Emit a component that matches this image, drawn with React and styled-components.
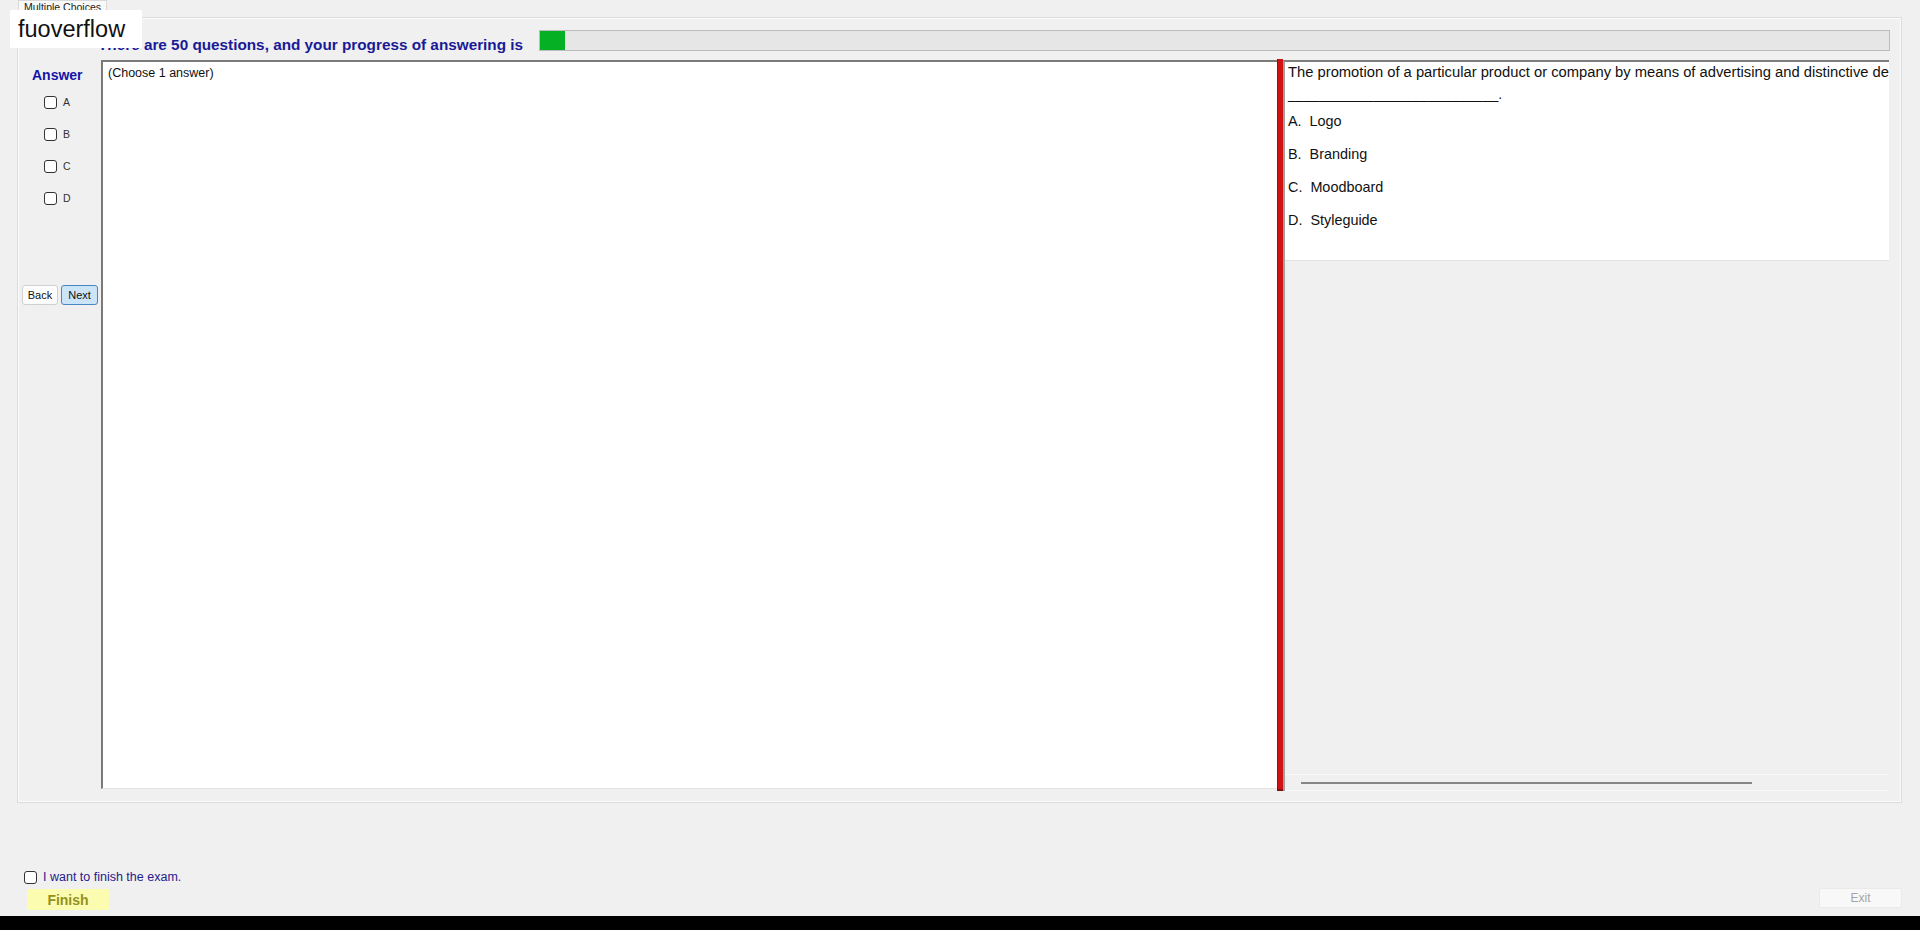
import React from "react";
import styled, { createGlobalStyle } from "styled-components";

// Base
const GlobalStyle = createGlobalStyle`
  html, body {
    margin: 0;
    padding: 0;
    background: #f0f0f0;
  }
  body {
    font-family: "Liberation Sans", Arial, sans-serif;
    color: #111;
  }
`;

const Window = styled.div`
  position: relative;
  width: 1920px;
  height: 930px;
  display: flex;
  flex-direction: column;
  background: #f0f0f0;
  overflow: hidden;
`;

const Watermark = styled.div`
  position: absolute;
  left: 10px;
  top: 10px;
  width: 132px;
  height: 38px;
  box-sizing: border-box;
  padding-left: 8px;
  background: #ffffff;
  font-size: 23.5px;
  line-height: 38px;
  color: #111;
  z-index: 5;
`;

// Tabs
const TabStrip = styled.div`
  height: 17px;
  display: flex;
  padding-left: 18px;
`;

const Tab = styled.div`
  width: 89px;
  height: 18px;
  box-sizing: border-box;
  border: 1px solid #d9d9d9;
  border-bottom: none;
  background: #f9f9f9;
  font-size: 10.5px;
  line-height: 12px;
  color: #222;
  text-align: center;
  overflow: hidden;
  position: relative;
  z-index: 1;
`;

const TabPage = styled.div`
  margin-left: 17px;
  width: 1885px;
  height: 786px;
  box-sizing: border-box;
  border: 1px solid #dcdcdc;
  box-shadow: inset 1px 1px 0 #fbfbfb, inset -1px -1px 0 #fbfbfb;
  display: flex;
  flex-direction: column;
`;

// Header
const Header = styled.div`
  height: 42px;
  display: flex;
  align-items: flex-start;
  padding-left: 80px;
`;

const Heading = styled.div`
  margin-top: 18px;
  font-size: 15.3px;
  line-height: 17px;
  font-weight: bold;
  color: #1a1a96;
  white-space: nowrap;
`;

const ProgressTrack = styled.div`
  margin: 12px 11px 0 16px;
  flex: 1;
  height: 21px;
  box-sizing: border-box;
  border: 1px solid #bcbcbc;
  background: #e6e6e6;
`;

const ProgressFill = styled.div`
  height: 100%;
  background: #06b025;
`;

// Body
const Body = styled.div`
  height: 731px;
  display: flex;
`;

const AnswerColumn = styled.div`
  width: 83px;
  display: flex;
  flex-direction: column;
  padding-top: 7px;
  box-sizing: border-box;
`;

const AnswerTitle = styled.div`
  padding-left: 14px;
  font-size: 14px;
  line-height: 16px;
  font-weight: bold;
  color: #1414a6;
`;

const OptionList = styled.div`
  margin-top: 3px;
  display: flex;
  flex-direction: column;
`;

const OptionRow = styled.label`
  height: 32px;
  display: flex;
  align-items: center;
  gap: 6px;
  padding-left: 26px;
  font-size: 10.5px;
  color: #333;
`;

const Box = styled.input.attrs({ type: "checkbox" })`
  appearance: none;
  margin: 0;
  width: 13px;
  height: 13px;
  box-sizing: border-box;
  border: 1px solid #333;
  border-radius: 3px;
  background: #fff;
  flex: none;
`;

const NavRow = styled.div`
  margin-top: 71px;
  padding-left: 4px;
  display: flex;
  gap: 3px;
`;

const NavButton = styled.button`
  width: ${(p) => p.$w}px;
  height: 20px;
  padding: 0;
  box-sizing: border-box;
  border-radius: 3px;
  border: 1px solid ${(p) => (p.$primary ? "#4a87c2" : "#d0d0d0")};
  background: ${(p) => (p.$primary ? "#cce4f7" : "#fdfdfd")};
  font-family: inherit;
  font-size: 11px;
  color: #111;
`;

const MainPanel = styled.div`
  width: 1176px;
  height: 729px;
  box-sizing: border-box;
  background: #fff;
  border-top: 2px solid #7a7a7a;
  border-left: 2px solid #7a7a7a;
  border-bottom: 1px solid #e4e4e4;
  padding: 4px 0 0 5px;
  font-size: 12.5px;
  line-height: 15px;
  color: #111;
`;

const Divider = styled.div`
  width: 6px;
  height: 732px;
  margin-top: -1px;
  box-sizing: border-box;
  background: #d01212;
  border-left: 1px solid #a00c0c;
  border-bottom: 2px solid #8a0e0e;
`;

const RightPanel = styled.div`
  width: 606px;
  height: 731px;
  box-sizing: border-box;
  border-left: 2px solid #a0a0a0;
  border-top: 2px solid #7e7e7e;
  display: flex;
  flex-direction: column;
`;

const QuestionBox = styled.div`
  height: 199px;
  box-sizing: border-box;
  background: #fff;
  padding: 2px 0 0 3px;
  font-size: 14.4px;
  color: #111;
  overflow: hidden;
  white-space: pre;
  border-bottom: 1px solid #e2e2e2;
`;

const QuestionLine = styled.div`
  line-height: 16px;
  height: ${(p) => p.$h || 16}px;
  font-size: ${(p) => p.$size || 14.4}px;
`;

const Choice = styled.div`
  line-height: 16px;
  height: 33px;
`;

const GrayArea = styled.div`
  flex: 1;
  background: #f0f0f0;
`;

const HScroll = styled.div`
  height: 17px;
  box-sizing: border-box;
  border-top: 1px solid #fafafa;
  border-bottom: 1px solid #fafafa;
  display: flex;
  align-items: center;
  padding-left: 16px;
`;

const Thumb = styled.div`
  width: 451px;
  height: 2px;
  background: #868686;
`;

// Footer
const Footer = styled.div`
  height: 113px;
  display: flex;
  justify-content: space-between;
  align-items: flex-end;
  padding: 0 18px 6px 24px;
  box-sizing: border-box;
`;

const FinishGroup = styled.div`
  display: flex;
  flex-direction: column;
`;

const ConfirmRow = styled.label`
  display: flex;
  align-items: center;
  gap: 6px;
  font-size: 12.5px;
  color: #26208c;
  height: 16px;
`;

const FinishButton = styled.button`
  margin: 4px 0 0 3px;
  width: 82px;
  height: 21px;
  padding: 0;
  border: none;
  border-radius: 2px;
  background: #fcfcb0;
  font-family: inherit;
  font-weight: bold;
  font-size: 14px;
  color: #92921c;
`;

const ExitButton = styled.button`
  margin-bottom: 2px;
  width: 83px;
  height: 20px;
  padding: 0;
  border: 1px solid #eaeaea;
  border-radius: 2px;
  background: #f8f8f8;
  font-family: inherit;
  font-size: 12px;
  color: #a4a4a4;
`;

const BlackBar = styled.div`
  height: 14px;
  background: #000;
`;

const options = ["A", "B", "C", "D"];
const choices = [
  { key: "A", text: "Logo" },
  { key: "B", text: "Branding" },
  { key: "C", text: "Moodboard" },
  { key: "D", text: "Styleguide" },
];

const App = () => {
  const progress = 25;

  return (
    <Window>
      <GlobalStyle />
      <Watermark>fuoverflow</Watermark>

      <TabStrip>
        <Tab>Multiple Choices</Tab>
      </TabStrip>

      <TabPage>
        <Header>
          <Heading>There are 50 questions, and your progress of answering is</Heading>
          <ProgressTrack>
            <ProgressFill style={{ width: `${progress}px` }} />
          </ProgressTrack>
        </Header>

        <Body>
          <AnswerColumn>
            <AnswerTitle>Answer</AnswerTitle>
            <OptionList>
              {options.map((o) => (
                <OptionRow key={o}>
                  <Box />
                  {o}
                </OptionRow>
              ))}
            </OptionList>
            <NavRow>
              <NavButton $w={36}>Back</NavButton>
              <NavButton $w={37} $primary>
                Next
              </NavButton>
            </NavRow>
          </AnswerColumn>

          <MainPanel>(Choose 1 answer)</MainPanel>

          <Divider />

          <RightPanel>
            <QuestionBox>
              <QuestionLine $h={22} $size={14.75}>
                The promotion of a particular product or company by means of advertising and distinctive design is
              </QuestionLine>
              <QuestionLine $h={27} $size={14}>
                ___________________________.
              </QuestionLine>
              {choices.map((c) => (
                <Choice key={c.key}>{`${c.key}.  ${c.text}`}</Choice>
              ))}
            </QuestionBox>
            <GrayArea />
            <HScroll>
              <Thumb />
            </HScroll>
          </RightPanel>
        </Body>
      </TabPage>

      <Footer>
        <FinishGroup>
          <ConfirmRow>
            <Box />I want to finish the exam.
          </ConfirmRow>
          <FinishButton>Finish</FinishButton>
        </FinishGroup>
        <ExitButton disabled>Exit</ExitButton>
      </Footer>

      <BlackBar />
    </Window>
  );
};

export default App;
